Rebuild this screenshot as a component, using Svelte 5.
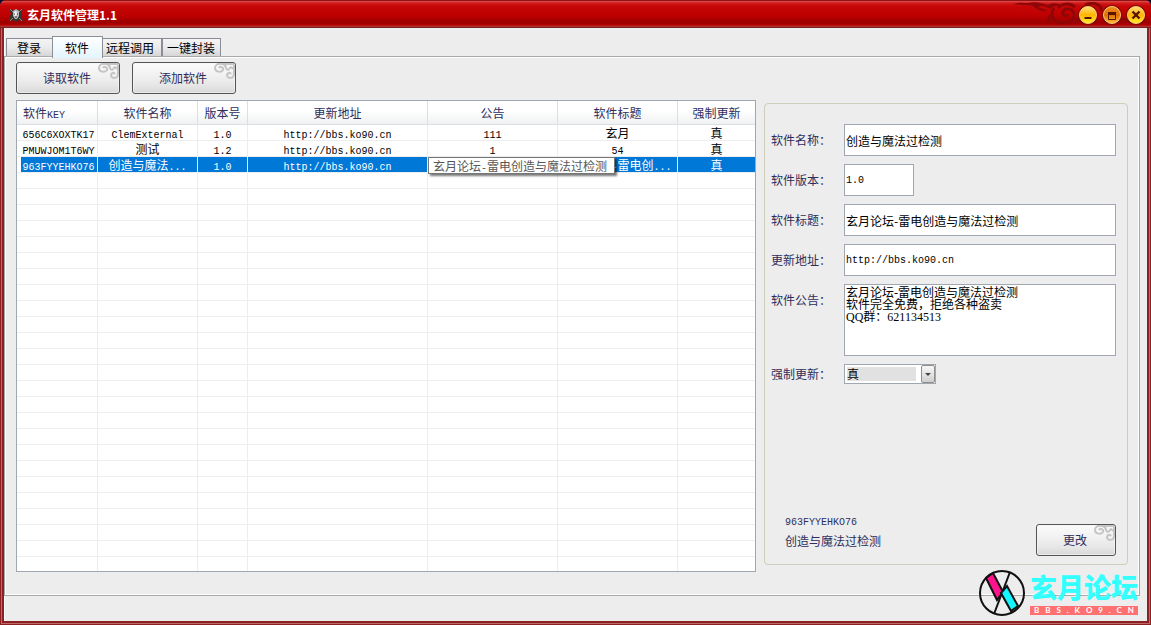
<script lang="ts">
interface Software {
  key: string;
  name: string;
  version: string;
  url: string;
  notice: string;
  title: string;
  force: string;
}

const tabs = ["登录", "软件", "远程调用", "一键封装"];

const columns = [
  { label: "软件KEY", width: 81 },
  { label: "软件名称", width: 100 },
  { label: "版本号", width: 50 },
  { label: "更新地址", width: 180 },
  { label: "公告", width: 130 },
  { label: "软件标题", width: 120 },
  { label: "强制更新", width: 77 },
];

const rows: Software[] = [
  { key: "656C6XOXTK17", name: "ClemExternal", version: "1.0", url: "http://bbs.ko90.cn", notice: "111", title: "玄月", force: "真" },
  { key: "PMUWJOM1T6WY", name: "测试", version: "1.2", url: "http://bbs.ko90.cn", notice: "1", title: "54", force: "真" },
  { key: "963FYYEHKO76", name: "创造与魔法...", version: "1.0", url: "http://bbs.ko90.cn", notice: "", title: "玄月论坛-雷电创...", force: "真" },
];

const emptyRows = 25;

let activeTab = $state(1);
let selected = $state(2);

let form = $state({
  name: "创造与魔法过检测",
  version: "1.0",
  title: "玄月论坛-雷电创造与魔法过检测",
  url: "http://bbs.ko90.cn",
  notice: "玄月论坛-雷电创造与魔法过检测\n软件完全免费，拒绝各种盗卖\nQQ群：621134513",
  force: "真",
});

// Latin runs are set in a half-width mono face next to the Chinese glyphs
function split(text: string) {
  return text.match(/[\x21-\x7e]+|[^\x21-\x7e]+/g) ?? [];
}

function isLatin(part: string) {
  return /^[\x21-\x7e]/.test(part);
}
</script>

{#snippet mixed(text: string)}
  {#each split(text) as part}{#if isLatin(part)}<span class="latin">{part}</span>{:else}{part}{/if}{/each}
{/snippet}

{#snippet cloud()}
  <svg class="cloud" width="21" height="17" viewBox="0 0 21 17" aria-hidden="true">
    <path d="M20 1H8C4 0 1 2 1 5c0 4 6 5 8 2 1-3-3-4-4-2M9 1c2 1 3 2 3 4 1 3 4 2 4-1" />
    <path d="M20 2v9c0 5-7 5-7 1 0-2 3-3 4-1M20 6c-2-1-3-2-4-2" />
  </svg>
{/snippet}

<div class="window">
  <header class="titlebar">
    <svg class="app-icon" width="14" height="14" viewBox="0 0 14 14" aria-hidden="true">
      <path d="M0 1l3 1 8 0 3-1-2 4 1 5 1 3-4-1-3 2-3-2-4 1 1-4 1-4z" fill="#353535" />
      <path d="M1 1l3 3M13 1l-3 3M1 13l3-3M13 13l-3-3" stroke="#888" />
      <path d="M4 3l3-2 3 2v5l-2 3H6L4 8z" fill="#b9b9b9" />
      <path d="M5 4l2-1 1 2-1 4-2-2z" fill="#f4f4f4" />
      <path d="M5 6h1M8 6h1M6 9h2" stroke="#333" />
    </svg>
    <h1>玄月软件管理1.1</h1>
    <svg class="flames" width="124" height="25" viewBox="0 0 124 25" aria-hidden="true">
      <path d="M0 2c6-2 10-1 15-1 8-2 14 0 20 2 5-3 11-2 14 1-6-1-10 1-12 3-5-3-8-4-12-2 2 2 7 1 9 4-6 1-10-2-14-5C13 2 8 4 0 2z" fill="#8f0606" />
      <path d="M41 6c-4 5-2 12 4 14 8 3 17-1 16-8-1-6-9-7-11-2-1 4 4 5 5 2M38 20c-3-1-3-5 0-6M45 6c4-5 12-5 17-1M62 20c5-6 13-7 20-2M72 3c8-4 18 0 16 6M92 20c8-5 18-4 27 0" fill="none" stroke="#8f0606" stroke-width="3" />
    </svg>
    <div class="controls">
      <button type="button" aria-label="最小化">
        <svg width="12" height="12" viewBox="0 0 12 12"><path d="M2.5 9h7" stroke="#571500" stroke-width="2" /></svg>
      </button>
      <button type="button" class="dim" aria-label="最大化">
        <svg width="12" height="12" viewBox="0 0 12 12"><path d="M2.5 3v7.5h7V3" fill="none" stroke="#571500" /><path d="M2 3h8v3H2z" fill="#571500" /></svg>
      </button>
      <button type="button" aria-label="关闭">
        <svg width="12" height="12" viewBox="0 0 12 12"><path d="M2.5 2.5l7 7M9.500 2.500l-7 7" stroke="#571500" stroke-width="2.4" /></svg>
      </button>
    </div>
  </header>

  <main class="body">
    <div class="tabs" role="tablist">
      {#each tabs as tab, index}
        <button
          type="button"
          role="tab"
          aria-selected={index === activeTab}
          class:active={index === activeTab}
          onclick={() => (activeTab = index)}
        >
          {tab}
        </button>
      {/each}
    </div>

    <section class="page">
      <div class="toolbar">
        <button type="button" class="button wide">读取软件{@render cloud()}</button>
        <button type="button" class="button wide">添加软件{@render cloud()}</button>
      </div>

      <div class="content">
        <div class="list">
          <table>
            <colgroup>
              {#each columns as column}
                <col style:width="{column.width}px" />
              {/each}
            </colgroup>
            <thead>
              <tr>
                {#each columns as column}
                  <th scope="col">{@render mixed(column.label)}</th>
                {/each}
              </tr>
            </thead>
            <tbody>
              {#each rows as row, index}
                <tr class:selected={index === selected} onclick={() => (selected = index)}>
                  <td>{@render mixed(row.key)}</td>
                  <td>{@render mixed(row.name)}</td>
                  <td>{@render mixed(row.version)}</td>
                  <td>{@render mixed(row.url)}</td>
                  <td class="notice">
                    {#if row.notice}
                      {@render mixed(row.notice)}
                    {:else}
                      <div class="tooltip" role="tooltip">{@render mixed("玄月论坛-雷电创造与魔法过检测")}</div>
                    {/if}
                  </td>
                  <td>{@render mixed(row.title)}</td>
                  <td>{row.force}</td>
                </tr>
              {/each}
              {#each Array(emptyRows) as _}
                <tr>
                  {#each columns as _column}
                    <td></td>
                  {/each}
                </tr>
              {/each}
            </tbody>
          </table>
        </div>

        <form class="panel" onsubmit={(e) => e.preventDefault()}>
          <div class="field">
            <label for="name">软件名称：</label>
            <input id="name" type="text" bind:value={form.name} />
          </div>
          <div class="field">
            <label for="version">软件版本：</label>
            <input id="version" type="text" class="latin short" bind:value={form.version} />
          </div>
          <div class="field">
            <label for="title">软件标题：</label>
            <input id="title" type="text" bind:value={form.title} />
          </div>
          <div class="field">
            <label for="url">更新地址：</label>
            <input id="url" type="text" class="latin" bind:value={form.url} />
          </div>
          <div class="field">
            <label for="notice">软件公告：</label>
            <textarea id="notice" bind:value={form.notice}></textarea>
          </div>
          <div class="field choice">
            <label for="force">强制更新：</label>
            <div class="select">
              <select id="force" bind:value={form.force}>
                <option>真</option>
                <option>假</option>
              </select>
              <span class="arrow"></span>
            </div>
          </div>

          <div class="summary">
            <div class="current">
              <div>{@render mixed("963FYYEHKO76")}</div>
              <div>创造与魔法过检测</div>
            </div>
            <button type="submit" class="button">更改{@render cloud()}</button>
          </div>
        </form>
      </div>
    </section>
  </main>

  <div class="brand">
    <svg width="48" height="48" viewBox="0 0 48 48" aria-hidden="true">
      <path d="M32 3L16 45" stroke="#111" stroke-width="2" />
      <path d="M8 9l7-5 10 19-6 8z" fill="#ff148c" stroke="#111" stroke-width="2" />
      <path d="M23 24l6-7 11 20-7 5z" fill="#14f5ff" stroke="#111" stroke-width="2" />
      <circle cx="24" cy="24" r="22" fill="none" stroke="#111" stroke-width="2" />
    </svg>
    <div class="brand-text">
      <strong>玄月论坛</strong>
      <div class="site">
        {#each "BBS.KO9.CN" as char}<span>{char}</span>{/each}
      </div>
    </div>
  </div>
</div>

<style>
:global(body) {
  margin: 0;
  background: #0b0b2c;
}

.window {
  position: relative;
  display: flex;
  flex-direction: column;
  box-sizing: border-box;
  min-height: 100vh;
  border-radius: 6px 6px 0 0;
  overflow: hidden;
  background: #8c2023;
  font-family: "Noto Sans CJK SC", sans-serif;
  font-size: 12px;
  line-height: 16px;
  color: #000;
}

button,
input,
textarea,
select {
  box-sizing: border-box;
  margin: 0;
  font: inherit;
  color: inherit;
}

.latin {
  font-family: "Liberation Mono", monospace;
  font-size: 10px;
  line-height: 1px;
}

.titlebar {
  display: flex;
  align-items: center;
  box-sizing: border-box;
  height: 28px;
  padding: 1px 6px 0 9px;
  border-top: 1px solid #8d1515;
  border-bottom: 1px solid #7c2020;
  background: linear-gradient(#e05050, #d31c1c 2px, #c70707 5px, #bf0000 14px, #9c0000 22px, #b90000 24px, #a74444);
}

h1 {
  flex: 1;
  margin: 0 0 0 4px;
  font-size: 12px;
  line-height: 16px;
  color: #fff;
}

.flames {
  margin-right: -58px;
}

.controls {
  display: flex;
  gap: 6px;
  position: relative;
}

.controls button {
  display: flex;
  align-items: center;
  justify-content: center;
  width: 18px;
  height: 18px;
  padding: 0;
  border: 1px solid #ffd27a;
  border-radius: 50%;
  background: linear-gradient(#ffdc75, #ffb400 50%, #ffee28);
  box-shadow: 0 0 0 1px #6d1000;
}

.controls button.dim {
  background: linear-gradient(#ee8c20, #df7000 50%, #ffb53b);
}

.body {
  flex: 1;
  display: flex;
  flex-direction: column;
  border: solid #8c2023;
  border-width: 0 4px 4px;
  background: #ededed;
  box-shadow: inset 1px 0 #fafafa;
}

.window::after {
  content: "";
  position: absolute;
  inset: 28px 1px 1px;
  border: solid #bd6969;
  border-width: 0 1px 1px;
  pointer-events: none;
}

.tabs {
  display: flex;
  align-items: flex-end;
  height: 28px;
  padding-left: 2px;
}

.tabs button {
  height: 18px;
  padding: 0 5px 0 4px;
  border: 1px solid #8b8e99;
  border-bottom: 0;
  background: linear-gradient(#f4f4f4, #ebebeb 50%, #d6d6d6);
  line-height: 16px;
}

.tabs button:first-child {
  padding: 0 11px 0 10px;
  border-right: 0;
}

.tabs button.active {
  position: relative;
  height: 22px;
  margin-bottom: -2px;
  padding: 0 13px 0 12px;
  background: linear-gradient(#fff, #e3f5fd);
}

.tabs button.active + button {
  padding: 0 7px 0 3px;
  border-left: 0;
}

.page {
  flex: 1;
  display: flex;
  flex-direction: column;
  gap: 6px;
  margin: 0 7px 25px 0;
  padding: 5px 11px 23px;
  border: 1px solid #a9a9a9;
  box-shadow: inset 0 0 0 1px #fff;
}

.toolbar {
  display: flex;
  gap: 12px;
}

.button {
  position: relative;
  width: 80px;
  height: 32px;
  padding: 0 2px 0 0;
  border: 1px solid #555;
  border-radius: 3px;
  background: linear-gradient(#fbfbfb, #f0f0f0 45%, #e6e6e6 75%, #d8d8d8);
  box-shadow: inset 0 0 0 1px #f5f5f5aa;
  color: #2e2e5c;
}

.button.wide {
  width: 104px;
}

.cloud {
  position: absolute;
  top: 0;
  right: 0;
  fill: none;
  stroke: #c5c5c5;
  stroke-width: 2;
}

.content {
  flex: 1;
  display: flex;
  gap: 8px;
}

.list {
  flex: 1;
  box-sizing: border-box;
  height: 472px;
  border: 1px solid #a0a7b0;
  background: #fff;
  overflow: hidden;
}

table {
  width: 100%;
  table-layout: fixed;
  border-collapse: separate;
  border-spacing: 0;
}

th,
td {
  box-sizing: border-box;
  padding: 0;
  border-right: 1px solid #ededed;
  border-bottom: 1px solid #ededed;
  text-align: center;
  white-space: nowrap;
}

th:last-child,
td:last-child {
  border-right: 0;
}

th {
  height: 24px;
  border-color: #dcdfe1;
  background: linear-gradient(#fff 40%, #f0f1f3);
  font-weight: normal;
  color: #2e2e5c;
}

th:first-child {
  padding-left: 6px;
  text-align: left;
}

td {
  height: 16px;
  line-height: 15px;
}

td:first-child {
  padding-left: 3px;
}

.selected td {
  background: #0078d7;
  color: #fff;
}

.selected td:first-child {
  background: linear-gradient(to right, #fff 4px, #0078d7 4px);
}

.notice {
  position: relative;
}

.tooltip {
  position: absolute;
  top: 0;
  left: 0;
  z-index: 1;
  padding: 0 7px 0 4px;
  border: 1px solid #767676;
  background: #fff;
  box-shadow: 2px 2px 2px #0008;
  color: #575757;
}

.panel {
  display: flex;
  flex-direction: column;
  gap: 8px;
  box-sizing: border-box;
  width: 364px;
  margin: 3px 0 7px;
  padding: 20px 11px 8px 6px;
  border: 1px solid #cdcdb9;
  border-radius: 4px;
}

.field {
  display: flex;
}

.field label {
  width: 73px;
  line-height: 32px;
  color: #2e2e5c;
}

.field input,
.field textarea {
  flex: 1;
  min-width: 0;
  height: 32px;
  padding: 0 1px;
  border: 1px solid #a0a7b0;
  border-radius: 0;
  background: #fff;
  outline: none;
}

.field input.latin {
  font-family: "Liberation Mono", monospace;
  font-size: 10px;
  line-height: 16px;
}

.field input.short {
  flex: none;
  width: 70px;
}

.field textarea {
  height: 72px;
  padding: 2px 1px;
  font-family: "Liberation Serif", "Noto Sans CJK SC", serif;
  line-height: 12px;
  resize: none;
}

.choice label {
  line-height: 20px;
}

.select {
  position: relative;
}

.select select {
  display: block;
  width: 92px;
  height: 20px;
  padding: 0 18px 0 2px;
  border: 1px solid #a0a7b0;
  border-radius: 0;
  appearance: none;
  background: linear-gradient(#e1e1e1, #e1e1e1) 2px 2px / 69px 14px no-repeat #fff;
  outline: none;
}

.arrow {
  position: absolute;
  top: 1px;
  right: 1px;
  display: flex;
  align-items: center;
  justify-content: center;
  box-sizing: border-box;
  width: 14px;
  height: 18px;
  border: 1px solid #8f8f8f;
  border-radius: 2px;
  background: linear-gradient(#f7f7f7, #e4e4e4 50%, #cfcfcf);
  pointer-events: none;
}

.arrow::before {
  content: "";
  border: 3px solid transparent;
  border-top-color: #444;
  border-bottom: 0;
}

.summary {
  display: flex;
  align-items: flex-end;
  justify-content: space-between;
  margin-top: auto;
}

.current {
  padding: 0 0 5px 14px;
  line-height: 21px;
  color: #2e2e5c;
}

.brand {
  position: absolute;
  right: 13px;
  bottom: 8px;
  display: flex;
  align-items: flex-end;
  gap: 4px;
}

.brand-text strong {
  display: block;
  font-size: 27px;
  line-height: 38px;
  font-weight: 900;
  color: #3ff;
}

.site {
  display: flex;
  justify-content: space-between;
  margin-bottom: 2px;
  padding: 0 4px;
  background: #ff7070;
  font-family: Lato, sans-serif;
  font-size: 8px;
  font-weight: bold;
  line-height: 9px;
  color: #fff;
}
</style>
